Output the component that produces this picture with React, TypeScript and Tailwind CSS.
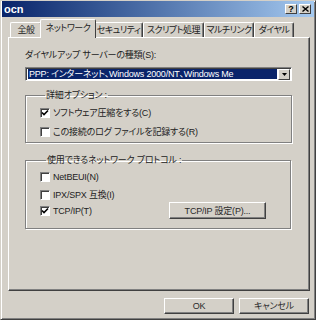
import type { ReactNode } from 'react';

const tabs = [
  { label: '全般', w: 'w-[32px]' },
  { label: 'ネットワーク', w: 'w-[56px]', active: true },
  { label: 'セキュリティ', w: 'w-[49px]' },
  { label: 'スクリプト処理', w: 'w-[61px]' },
  { label: 'マルチリンク', w: 'w-[50px]' },
  { label: 'ダイヤル', w: 'w-[40px]' },
];

function CheckBox({ checked }: { checked?: boolean }) {
  return (
    <span className="w-[10px] h-[10px] shrink-0 bg-white border border-t-[#808080] border-l-[#808080] border-r-white border-b-white shadow-[inset_1px_1px_0_#404040] flex items-center justify-center">
      {checked && (
        <svg width="8" height="8" viewBox="0 0 8 8">
          <path d="M1 3.5 L3 5.5 L7 1.5" stroke="#000" strokeWidth="1.6" fill="none" />
        </svg>
      )}
    </span>
  );
}

function CheckRow({ checked, children, className = '' }: { checked?: boolean; children: ReactNode; className?: string }) {
  return (
    <div className={`flex items-center gap-[3px] h-[12px] ${className}`}>
      <CheckBox checked={checked} />
      <span className="leading-[12px] whitespace-nowrap">{children}</span>
    </div>
  );
}

function Button({ children, className = '' }: { children: ReactNode; className?: string }) {
  return (
    <button className={`flex items-center justify-center bg-[#d4d0c8] border border-t-white border-l-white border-r-[#404040] border-b-[#404040] shadow-[inset_-1px_-1px_0_#808080] leading-[12px] text-[#2a2a2a] ${className}`}>
      {children}
    </button>
  );
}

function App() {
  return (
    <div className="w-[316px] h-[320px] bg-[#d4d0c8] border border-t-[#d4d0c8] border-l-[#d4d0c8] border-r-[#404040] border-b-[#404040] shadow-[inset_1px_1px_0_#fff,inset_-1px_-1px_0_#808080] flex flex-col font-['Liberation_Sans','Noto_Sans_CJK_JP',sans-serif] text-[9px] text-[#222] [font-feature-settings:'palt'] tracking-[-0.2px]">
      {/* title bar */}
      <div className="h-[16px] mx-[1px] flex items-center justify-between bg-gradient-to-r from-[#0a246a] to-[#a6caf0]">
        <span className="pl-[2px] text-white font-bold text-[11px] leading-[12px] tracking-normal">ocn</span>
        <div className="flex items-center gap-[2px] pr-[3px]">
          <span className="w-[12px] h-[10px] bg-[#d4d0c8] border border-t-white border-l-white border-r-[#404040] border-b-[#404040] flex items-center justify-center text-[9px] font-bold leading-none text-black">?</span>
          <span className="w-[12px] h-[10px] bg-[#d4d0c8] border border-t-white border-l-white border-r-[#404040] border-b-[#404040] flex items-center justify-center">
            <svg width="7" height="6" viewBox="0 0 7 6">
              <path d="M0.5 0.5 L6.5 5.5 M6.5 0.5 L0.5 5.5" stroke="#000" strokeWidth="1.4" />
            </svg>
          </span>
        </div>
      </div>

      {/* tabs */}
      <div className="mt-[2px] ml-[9px] h-[18px] flex items-end tracking-[-0.5px]">
        {tabs.map((t) =>
          t.active ? (
            <div
              key={t.label}
              className={`${t.w} h-[19px] -mb-[1px] -mx-[2px] relative z-10 bg-[#d4d0c8] border-t border-l border-r border-t-white border-l-white border-r-[#404040] rounded-t-[2px] flex items-center justify-center leading-[12px] pb-[2px] whitespace-nowrap`}
            >
              {t.label}
            </div>
          ) : (
            <div
              key={t.label}
              className={`${t.w} h-[15px] bg-[#d4d0c8] border-t border-l border-r border-t-white border-l-white border-r-[#404040] shadow-[inset_-1px_0_0_#808080] rounded-t-[2px] flex items-center justify-center leading-[12px] whitespace-nowrap`}
            >
              {t.label}
            </div>
          ),
        )}
      </div>

      {/* panel */}
      <div className="ml-[7px] w-[302px] h-[254px] border border-t-white border-l-white border-r-[#404040] border-b-[#404040] shadow-[inset_-1px_-1px_0_#808080] flex flex-col pl-[16px]">
        <div className="mt-[11px] leading-[12px]">ダイヤルアップ サーバーの種類(S):</div>

        <div className="mt-[6px] w-[267px] h-[14px] bg-white border border-t-[#808080] border-l-[#808080] border-r-white border-b-white shadow-[inset_1px_1px_0_#404040] flex items-center pl-[2px] pr-[1px]">
          <div className="flex-1 h-[10px] bg-[#0a246a] text-white leading-[10px] whitespace-nowrap overflow-hidden pl-[1px]">
            PPP: インターネット、Windows 2000/NT、Windows Me
          </div>
          <div className="w-[12px] h-[11px] ml-[1px] bg-[#d4d0c8] border border-t-white border-l-white border-r-[#404040] border-b-[#404040] flex items-center justify-center">
            <svg width="5" height="3" viewBox="0 0 5 3">
              <path d="M0 0 H5 L2.5 3 Z" fill="#000" />
            </svg>
          </div>
        </div>

        <fieldset className="mt-[8px] w-[267px] h-[54px] border border-[#808080] shadow-[1px_1px_0_#fff,inset_1px_1px_0_#fff] pl-[14px] pt-[6px] flex flex-col gap-[7px]">
          <legend className="ml-[5px] px-[1px] leading-[12px]">詳細オプション :</legend>
          <CheckRow checked>ソフトウェア圧縮をする(C)</CheckRow>
          <CheckRow>この接続のログ ファイルを記録する(R)</CheckRow>
        </fieldset>

        <fieldset className="mt-[11px] w-[266px] h-[75px] border border-[#808080] shadow-[1px_1px_0_#fff,inset_1px_1px_0_#fff] pl-[14px] pt-[5px] flex flex-col">
          <legend className="ml-[6px] px-[1px] leading-[12px]">使用できるネットワーク プロトコル :</legend>
          <CheckRow>NetBEUI(N)</CheckRow>
          <CheckRow className="mt-[6px]">IPX/SPX 互換(I)</CheckRow>
          <div className="flex items-center mt-[1px]">
            <CheckRow checked className="w-[129px]">TCP/IP(T)</CheckRow>
            <Button className="w-[97px] h-[17px]">TCP/IP 設定(P)...</Button>
          </div>
        </fieldset>
      </div>

      {/* footer buttons */}
      <div className="mt-[7px] ml-[163px] flex gap-[5px]">
        <Button className="w-[70px] h-[16px] shadow-[inset_-1px_-1px_0_#404040]">OK</Button>
        <Button className="w-[70px] h-[16px]">キャンセル</Button>
      </div>
    </div>
  );
}

export default App;
